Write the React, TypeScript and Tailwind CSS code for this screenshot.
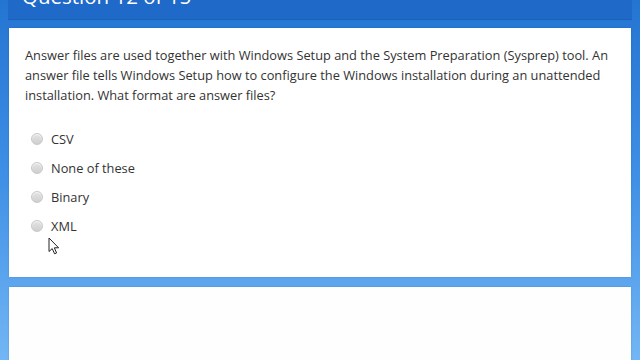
import React from 'react';

const options = ['CSV', 'None of these', 'Binary', 'XML'];

const Radio: React.FC = () => (
  <span className="w-[12px] h-[12px] rounded-full border border-[#c8c8c8] bg-gradient-to-b from-[#e4e4e4] to-[#cfcfcf] shadow-[inset_0_1px_1px_rgba(255,255,255,0.7)] flex-shrink-0" />
);

const Cursor: React.FC = () => (
  <svg width="12" height="18" viewBox="0 0 12 18" className="absolute left-[48px] top-[237px]">
    <path d="M1 1 L1 14.5 L4.2 11.6 L6.6 16.8 L8.6 15.9 L6.3 10.8 L10.6 10.8 Z" fill="#fff" stroke="#222" strokeWidth="1" strokeLinejoin="round" />
  </svg>
);

export default function App() {
  return (
    <div
      className="relative w-full h-[360px] overflow-hidden bg-gradient-to-b from-[#2474d2] via-[#3f90e6] to-[#72b6f4]"
      style={{ fontFamily: '"Open Sans", "Noto Sans", sans-serif' }}
    >
      <div className="mx-2 h-[20px] bg-[#1f69c8] border-b border-[#1b5fb8] overflow-hidden">
        <div className="pl-[14px] -mt-[16px] text-[20.5px] leading-[24px] text-white">Question 12 of 15</div>
      </div>

      <div className="mx-[9px] mt-[8px] h-[249px] bg-white shadow-[0_0_2px_rgba(0,0,0,0.15)] pt-[17px] px-[16px]">
        <p className="text-[12.8px] leading-[20px] text-[#333]">
          Answer files are used together with Windows Setup and the System Preparation (Sysprep) tool. An answer file
          tells Windows Setup how to configure the Windows installation during an unattended installation. What format
          are answer files?
        </p>
        <div className="mt-[19px] flex flex-col">
          {options.map((o) => (
            <label key={o} className="h-[29px] flex items-center gap-[8px] pl-[6px]">
              <Radio />
              <span className="text-[12.8px] text-[#333] leading-none pt-[1px]">{o}</span>
            </label>
          ))}
        </div>
      </div>

      <div className="mx-[9px] mt-[10px] h-[100px] bg-[#fefefe] shadow-[0_0_2px_rgba(0,0,0,0.15)]" />

      <Cursor />
    </div>
  );
}
